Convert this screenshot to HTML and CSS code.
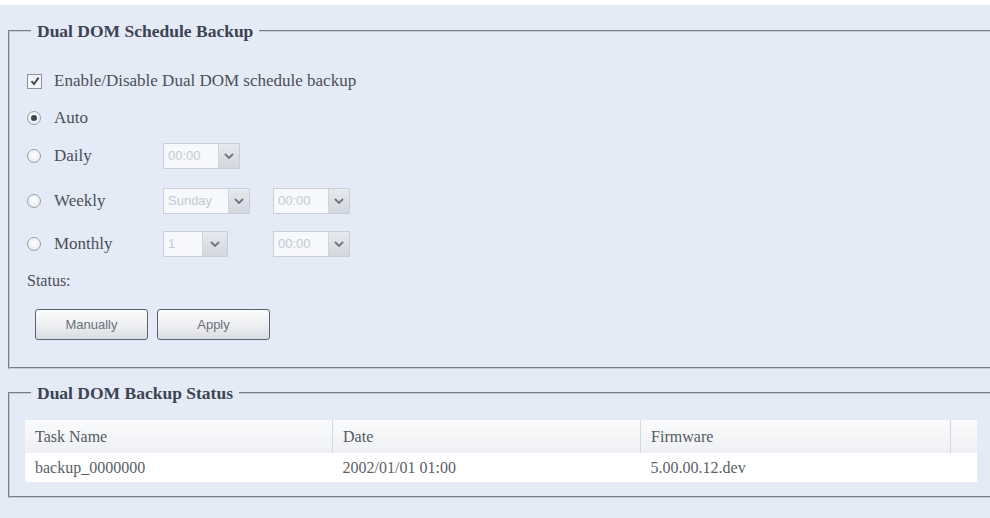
FILE: index.html
```html
<!DOCTYPE html>
<html>
<head>
<meta charset="utf-8">
<link rel="stylesheet" href="styles.css">
</head>
<body>
<div class="page">
  <fieldset class="box box-schedule">
    <legend class="box-title">Dual DOM Schedule Backup</legend>
    <div class="row row-check">
      <span class="check"><svg width="10" height="10" viewBox="0 0 10 10"><path d="M1.5 5.2 L4 8 L8.6 1.6" fill="none" stroke="#3c4450" stroke-width="1.8"/></svg></span>
      <span class="label-text">Enable/Disable Dual DOM schedule backup</span>
    </div>
    <div class="row row-auto">
      <span class="radio checked"></span>
      <span class="label-text">Auto</span>
    </div>
    <div class="row row-daily">
      <div class="opt"><span class="radio"></span><span class="label-text">Daily</span></div>
      <div class="sel w77"><span class="sel-val">00:00</span><span class="sel-btn"><svg width="10" height="6" viewBox="0 0 10 6"><path d="M1 1 L5 5 L9 1" fill="none" stroke="#6d7480" stroke-width="1.8"/></svg></span></div>
    </div>
    <div class="row row-weekly">
      <div class="opt"><span class="radio"></span><span class="label-text">Weekly</span></div>
      <div class="sel w87"><span class="sel-val">Sunday</span><span class="sel-btn"><svg width="10" height="6" viewBox="0 0 10 6"><path d="M1 1 L5 5 L9 1" fill="none" stroke="#6d7480" stroke-width="1.8"/></svg></span></div>
      <div class="sel w77"><span class="sel-val">00:00</span><span class="sel-btn"><svg width="10" height="6" viewBox="0 0 10 6"><path d="M1 1 L5 5 L9 1" fill="none" stroke="#6d7480" stroke-width="1.8"/></svg></span></div>
    </div>
    <div class="row row-monthly">
      <div class="opt"><span class="radio"></span><span class="label-text">Monthly</span></div>
      <div class="sel w65 sel-wide-btn"><span class="sel-val">1</span><span class="sel-btn"><svg width="10" height="6" viewBox="0 0 10 6"><path d="M1 1 L5 5 L9 1" fill="none" stroke="#6d7480" stroke-width="1.8"/></svg></span></div>
      <div class="sel w77 push"><span class="sel-val">00:00</span><span class="sel-btn"><svg width="10" height="6" viewBox="0 0 10 6"><path d="M1 1 L5 5 L9 1" fill="none" stroke="#6d7480" stroke-width="1.8"/></svg></span></div>
    </div>
    <div class="row row-status">
      <span class="label-text">Status:</span>
    </div>
    <div class="buttons">
      <button class="btn" type="button">Manually</button>
      <button class="btn" type="button">Apply</button>
    </div>
  </fieldset>

  <fieldset class="box box-status">
    <legend class="box-title">Dual DOM Backup Status</legend>
    <table class="grid">
      <thead>
        <tr><th class="c1">Task Name</th><th class="c2">Date</th><th class="c3">Firmware</th><th class="c4"></th></tr>
      </thead>
      <tbody>
        <tr><td>backup_0000000</td><td>2002/01/01 01:00</td><td>5.00.00.12.dev</td><td></td></tr>
      </tbody>
    </table>
  </fieldset>
</div>
</body>
</html>
```

FILE: styles.css
```css
html, body {
  margin: 0;
  padding: 0;
  background: #ffffff;
}
body {
  width: 990px;
  height: 518px;
  overflow: hidden;
  font-family: "Liberation Serif", "Times New Roman", serif;
  color: #4b5059;
}
.page {
  margin-top: 5px;
  height: 513px;
  background: #e4eaf6;
  padding: 16px 0 0 8px;
  box-sizing: border-box;
  overflow: hidden;
}
.box {
  margin: 0 -20px 0 0;
  border: 2px groove #c6cdd8;
  padding: 0 0 0 17px;
  min-width: 0;
}
.box-title {
  margin-left: 4px;
  padding: 0 6px;
  font-size: 17.5px;
  line-height: 20px;
  font-weight: bold;
  color: #3c4452;
}
.box-schedule {
  padding-top: 25px;
  padding-bottom: 27px;
}
.row {
  display: flex;
  align-items: center;
  height: 30px;
  font-size: 17px;
}
.row-auto { margin-top: 7px; }
.row-daily { margin-top: 8px; }
.row-weekly { margin-top: 15px; }
.row-monthly { margin-top: 13px; }
.row-status { margin-top: 10px; height: 24px; font-size: 16px; }
.opt {
  display: flex;
  align-items: center;
  width: 136px;
}
.label-text { white-space: nowrap; }
.check {
  width: 13px;
  height: 13px;
  border: 1px solid #8c939e;
  background: #f3f5f9;
  margin-right: 12px;
  display: flex;
  align-items: center;
  justify-content: center;
}
.radio {
  width: 12px;
  height: 12px;
  border: 1px solid #9aa1ab;
  border-radius: 50%;
  background: radial-gradient(circle at 50% 40%, #ffffff 0%, #dfe3ea 100%);
  margin-right: 13px;
  position: relative;
  flex: none;
}
.radio.checked::after {
  content: "";
  position: absolute;
  left: 3px;
  top: 3px;
  width: 6px;
  height: 6px;
  border-radius: 50%;
  background: #3f4550;
}
.sel {
  display: flex;
  height: 26px;
  border: 1px solid #c9cfd9;
  background: #f6f8fb;
  box-sizing: border-box;
  margin-right: 23px;
}
.w77 { width: 77px; }
.w87 { width: 87px; }
.w65 { width: 65px; }
.push { margin-left: 22px; }
.sel-val {
  flex: 1;
  padding-left: 4px;
  font-family: "Liberation Sans", Arial, sans-serif;
  font-size: 13px;
  line-height: 24px;
  color: #c3c9d3;
  overflow: hidden;
  white-space: nowrap;
  border-right: 1px solid #d0d5dd;
}
.sel-btn {
  width: 20px;
  background: linear-gradient(#e6e9ee, #d3d7de);
  display: flex;
  align-items: center;
  justify-content: center;
}
.sel-wide-btn .sel-btn { width: 24px; }
.buttons {
  display: flex;
  gap: 9px;
  margin-top: 16px;
  padding-left: 8px;
}
.btn {
  width: 113px;
  height: 31px;
  border: 1px solid #5d636c;
  border-radius: 3px;
  background: linear-gradient(#fbfcfd 0%, #eceef1 55%, #d9dce1 100%);
  font-family: "Liberation Sans", Arial, sans-serif;
  font-size: 13px;
  color: #6a707a;
  padding: 0;
}
.box-status {
  margin-top: 14px;
  padding-top: 17px;
  padding-bottom: 14px;
  padding-left: 15px;
}
.box-status .box-title {
  margin-left: 6px;
}
.grid {
  border-collapse: collapse;
  width: 952px;
  font-size: 16px;
}
.grid th, .grid td {
  text-align: left;
  font-weight: normal;
  padding: 0 0 0 10px;
  white-space: nowrap;
}
.grid th {
  height: 33px;
  background: linear-gradient(#fafbfc, #eef0f3);
  color: #555a62;
  border-right: 1px solid #d5d9df;
}
.grid td {
  height: 29px;
  background: #ffffff;
  color: #5a5f67;
}
.grid .c1 { width: 298px; }
.grid .c2 { width: 298px; }
.grid .c3 { width: 300px; }
.grid .c4 { width: 16px; border-right: none; }
```
